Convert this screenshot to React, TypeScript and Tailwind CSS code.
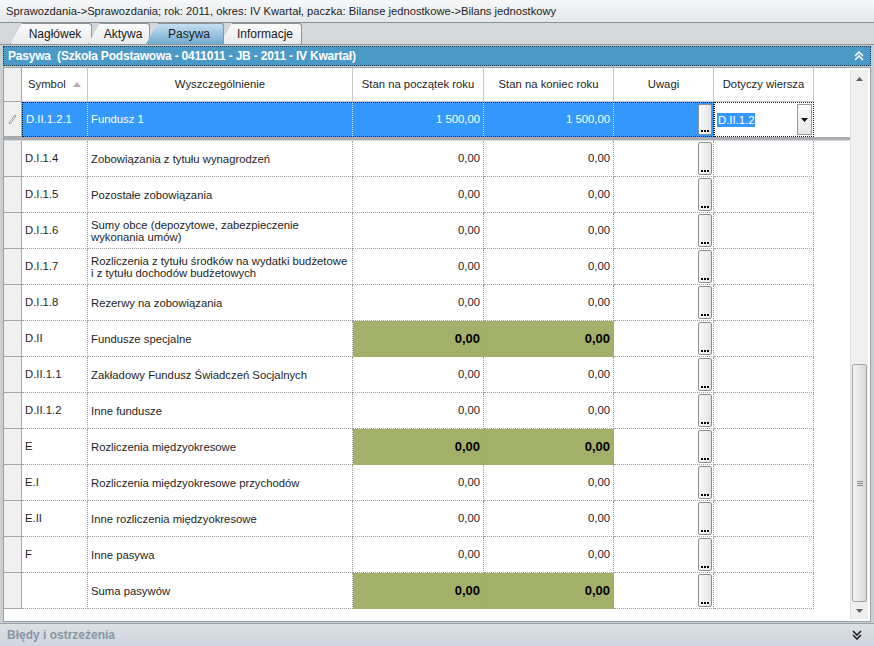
import React from 'react';

type Row = {
  symbol: string;
  name: string;
  start: string;
  end: string;
  sum?: boolean;
};

const rows: Row[] = [
  { symbol: 'D.I.1.4', name: 'Zobowiązania z tytułu wynagrodzeń', start: '0,00', end: '0,00' },
  { symbol: 'D.I.1.5', name: 'Pozostałe zobowiązania', start: '0,00', end: '0,00' },
  { symbol: 'D.I.1.6', name: 'Sumy obce (depozytowe, zabezpieczenie wykonania umów)', start: '0,00', end: '0,00' },
  { symbol: 'D.I.1.7', name: 'Rozliczenia z tytułu środków na wydatki budżetowe i z tytułu dochodów budżetowych', start: '0,00', end: '0,00' },
  { symbol: 'D.I.1.8', name: 'Rezerwy na zobowiązania', start: '0,00', end: '0,00' },
  { symbol: 'D.II', name: 'Fundusze specjalne', start: '0,00', end: '0,00', sum: true },
  { symbol: 'D.II.1.1', name: 'Zakładowy Fundusz Świadczeń Socjalnych', start: '0,00', end: '0,00' },
  { symbol: 'D.II.1.2', name: 'Inne fundusze', start: '0,00', end: '0,00' },
  { symbol: 'E', name: 'Rozliczenia międzyokresowe', start: '0,00', end: '0,00', sum: true },
  { symbol: 'E.I', name: 'Rozliczenia międzyokresowe przychodów', start: '0,00', end: '0,00' },
  { symbol: 'E.II', name: 'Inne rozliczenia międzyokresowe', start: '0,00', end: '0,00' },
  { symbol: 'F', name: 'Inne pasywa', start: '0,00', end: '0,00' },
  { symbol: '', name: 'Suma pasywów', start: '0,00', end: '0,00', sum: true },
];

const cell = 'border-r border-b border-dotted border-[#a0a0a0] flex items-center';

// the "..." editor button in the Uwagi column
const DotsButton = () => (
  <div className="w-[14px] self-stretch my-[1px] bg-gradient-to-r from-[#fafafa] to-[#e4e4e4] border border-[#8e8f8f] rounded-[2px] flex items-end justify-center pb-[2px]">
    <div className="flex gap-[1px]">
      <div className="w-[2px] h-[2px] bg-black" />
      <div className="w-[2px] h-[2px] bg-black" />
      <div className="w-[2px] h-[2px] bg-black" />
    </div>
  </div>
);

const Tab = ({ label, active, w }: { label: string; active?: boolean; w: string }) => (
  <div
    className={`${w} h-[21px] -mr-[4px] flex items-center justify-center pl-[14px] pr-[6px] border border-b-0 border-[#8e959c] rounded-tr-[3px] [clip-path:polygon(12px_0,100%_0,100%_100%,0_100%)] ${
      active ? 'bg-gradient-to-b from-[#c5e0f0] to-[#70aacf] z-10' : 'bg-gradient-to-b from-[#fbfbfb] to-[#e8eaec]'
    }`}
  >
    <span className="text-[12px] text-[#1a1a1a]">{label}</span>
  </div>
);

const App: React.FC = () => {
  return (
    <div className="w-[874px] h-[646px] flex flex-col bg-[#c8cdd2] overflow-hidden" style={{ fontFamily: '"Liberation Sans", Arial, sans-serif' }}>
      <div className="h-[23px] shrink-0 flex items-center px-[6px] bg-gradient-to-b from-[#f6f7f8] to-[#e4e7ea] border-b border-[#8c9398]">
        <span className="text-[11.2px] text-[#1e1e1e]">
          Sprawozdania-&gt;Sprawozdania; rok: 2011, okres: IV Kwartał, paczka: Bilanse jednostkowe-&gt;Bilans jednostkowy
        </span>
      </div>

      <div className="h-[22px] shrink-0 flex items-end pl-[10px] bg-[#d5d8db] border-b border-[#8c9398]">
        <Tab label="Nagłówek" w="w-[82px]" />
        <Tab label="Aktywa" w="w-[62px]" />
        <Tab label="Pasywa" w="w-[78px]" active />
        <Tab label="Informacje" w="w-[82px]" />
      </div>

      <div className="flex-1 flex flex-col px-[3px] pt-[1px] bg-[#c9ced3]">
        <div className="h-[20px] shrink-0 flex items-center justify-between px-[4px] bg-gradient-to-b from-[#4c9ac6] to-[#4899c8] border border-dotted border-[#1d3d52]">
          <span className="text-[12px] font-bold text-white tracking-[-0.2px]">Pasywa&nbsp; (Szkoła Podstawowa - 0411011 - JB - 2011 - IV Kwartał)</span>
          <svg width="10" height="10" viewBox="0 0 10 10" className="mr-[2px]">
            <path d="M1 5 L5 1 L9 5 M1 9 L5 5 L9 9" stroke="white" strokeWidth="1.6" fill="none" />
          </svg>
        </div>

        <div className="h-[555px] shrink-0 mt-[1px] bg-white border border-[#9aa0a6] flex">
          <div className="w-[846px] flex flex-col">
            {/* header */}
            <div className="h-[34px] flex bg-white text-[11.3px] text-[#1e1e1e]">
              <div className="w-[18px] border-r border-b border-[#a8a8a8] bg-[#f0f0f0]" />
              <div className="w-[66px] border-r border-b border-[#c8c8c8] flex items-center justify-between px-[6px]">
                <span>Symbol</span>
                <svg width="8" height="5" viewBox="0 0 8 5"><path d="M0 5 L4 0 L8 5 Z" fill="#b0b0b0" /></svg>
              </div>
              <div className="w-[265px] border-r border-b border-[#c8c8c8] flex items-center justify-center">Wyszczególnienie</div>
              <div className="w-[131px] border-r border-b border-[#c8c8c8] flex items-center justify-center">Stan na początek roku</div>
              <div className="w-[130px] border-r border-b border-[#c8c8c8] flex items-center justify-center">Stan na koniec roku</div>
              <div className="w-[100px] border-r border-b border-[#c8c8c8] flex items-center justify-center">Uwagi</div>
              <div className="w-[100px] border-r border-b border-[#c8c8c8] flex items-center justify-center">Dotyczy wiersza</div>
            </div>

            {/* selected / edited row */}
            <div className="h-[35px] flex text-[11.3px]">
              <div className="w-[18px] border-r border-b border-[#a8a8a8] bg-[#f0f0f0] flex items-center justify-center">
                <svg width="9" height="11" viewBox="0 0 9 11"><path d="M7 1 L8 2 L3 9 L1 10 L1.5 8 Z" stroke="#909090" strokeWidth="0.8" fill="none" /></svg>
              </div>
              <div className="w-[692px] flex bg-[#3399ff] text-white border border-dotted border-[#1a1a1a]">
                <div className="w-[65px] flex items-center px-[3px] border-r border-dotted border-[#cde]">D.II.1.2.1</div>
                <div className="w-[265px] flex items-center px-[3px] border-r border-dotted border-[#cde]">Fundusz 1</div>
                <div className="w-[131px] flex items-center justify-end px-[3px] border-r border-dotted border-[#cde]">1 500,00</div>
                <div className="w-[130px] flex items-center justify-end px-[3px] border-r border-dotted border-[#cde]">1 500,00</div>
                <div className="flex-1 flex justify-end pr-[1px]"><DotsButton /></div>
              </div>
              <div className="w-[100px] border border-dotted border-[#1a1a1a] bg-white flex items-center pl-[2px]">
                <span className="bg-[#3399ff] text-white leading-[14px] px-[1px]">D.II.1.2</span>
                <div className="ml-auto w-[15px] self-stretch my-[1px] mr-[1px] border border-[#9a9a9a] bg-gradient-to-b from-[#fdfdfd] to-[#e6e6e6] flex items-center justify-center">
                  <svg width="7" height="4" viewBox="0 0 7 4"><path d="M0 0 L7 0 L3.5 4 Z" fill="#111" /></svg>
                </div>
              </div>
            </div>

            <div className="h-[4px] bg-[#a8acb0] border-b border-[#d8d8d8]" />

            {rows.map((r, i) => (
              <div key={i} className="h-[36px] flex text-[11.3px] text-[#1e1e1e]">
                <div className="w-[18px] border-r border-b border-[#a8a8a8] bg-[#f0f0f0]" />
                <div className={`${cell} w-[66px] px-[3px]`}>{r.symbol}</div>
                <div className={`${cell} w-[265px] px-[3px] leading-[12px]`}>
                  <span>{r.name}</span>
                </div>
                <div className={`${cell} w-[131px] justify-end px-[3px] ${r.sum ? 'bg-[#a3b06a] font-bold text-[13px] text-black' : ''}`}>{r.start}</div>
                <div className={`${cell} w-[130px] justify-end px-[3px] ${r.sum ? 'bg-[#a3b06a] font-bold text-[13px] text-black' : ''}`}>{r.end}</div>
                <div className={`${cell} w-[100px] justify-end pr-[1px] items-stretch`}><DotsButton /></div>
                <div className={`${cell} w-[100px]`} />
              </div>
            ))}
          </div>

          {/* vertical scrollbar */}
          <div className="w-[18px] ml-auto mr-[2px] my-[2px] flex flex-col bg-[#efefef] border-l border-[#e0e0e0]">
            <div className="h-[17px] flex items-center justify-center">
              <svg width="7" height="4" viewBox="0 0 7 4"><path d="M0 4 L3.5 0 L7 4 Z" fill="#606060" /></svg>
            </div>
            <div className="h-[277px]" />
            <div className="flex-1 mx-[1px] rounded-[2px] border border-[#a4a4a4] bg-gradient-to-r from-[#f4f4f4] via-[#e6e6e6] to-[#d6d6d6] flex items-center justify-center">
              <div className="flex flex-col gap-[1px]">
                <div className="w-[6px] h-[1px] bg-[#8a8a8a]" />
                <div className="w-[6px] h-[1px] bg-[#8a8a8a]" />
                <div className="w-[6px] h-[1px] bg-[#8a8a8a]" />
              </div>
            </div>
            <div className="h-[17px] flex items-center justify-center">
              <svg width="7" height="4" viewBox="0 0 7 4"><path d="M0 0 L7 0 L3.5 4 Z" fill="#606060" /></svg>
            </div>
          </div>
        </div>

        <div className="flex-1 mt-[1px] -mx-[3px] flex items-center justify-between px-[7px] bg-gradient-to-b from-[#dbe0e5] to-[#cfd6dd] border-t border-[#9aa0a6]">
          <span className="text-[12px] font-bold text-[#8896a4]">Błędy i ostrzeżenia</span>
          <svg width="10" height="10" viewBox="0 0 10 10" className="mr-[5px]">
            <path d="M1 1 L5 5 L9 1 M1 5 L5 9 L9 5" stroke="#222" strokeWidth="1.6" fill="none" />
          </svg>
        </div>
      </div>
    </div>
  );
};

export default App;
